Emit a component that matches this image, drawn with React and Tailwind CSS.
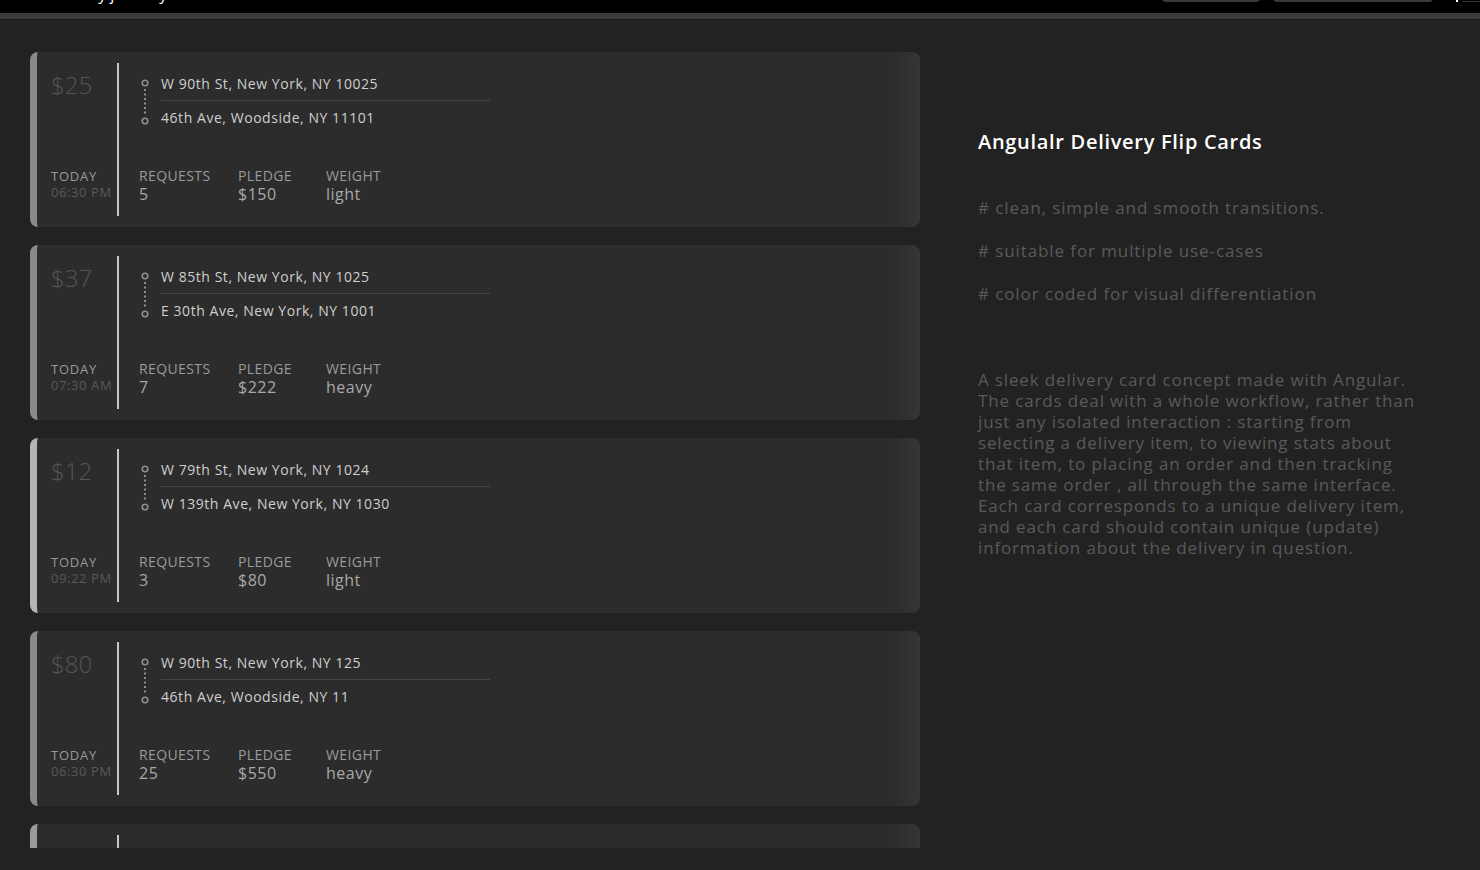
import React from "react";

const CARDS = [
  { price: "$25", from: "W 90th St, New York, NY 10025", to: "46th Ave, Woodside, NY 11101", time: "06:30 PM", requests: "5", pledge: "$150", weight: "light", stripe: "border-[#8a8a8a]" },
  { price: "$37", from: "W 85th St, New York, NY 1025", to: "E 30th Ave, New York, NY 1001", time: "07:30 AM", requests: "7", pledge: "$222", weight: "heavy", stripe: "border-[#8a8a8a]" },
  { price: "$12", from: "W 79th St, New York, NY 1024", to: "W 139th Ave, New York, NY 1030", time: "09:22 PM", requests: "3", pledge: "$80", weight: "light", stripe: "border-[#b4b4b4]" },
  { price: "$80", from: "W 90th St, New York, NY 125", to: "46th Ave, Woodside, NY 11", time: "06:30 PM", requests: "25", pledge: "$550", weight: "heavy", stripe: "border-[#8a8a8a]" },
  { price: "$15", from: "W 90th St, New York, NY 10025", to: "46th Ave, Woodside, NY 11101", time: "06:30 PM", requests: "4", pledge: "$90", weight: "light", stripe: "border-[#9a9a9a]" },
];

const font = "font-['Open_Sans','Liberation_Sans',sans-serif]";

function Route() {
  return (
    <svg width="10" height="46" viewBox="0 0 10 46" className="mt-[6px] ml-[1px] shrink-0">
      <circle cx="5" cy="4" r="2.8" fill="none" stroke="#8e8e8e" strokeWidth="1.6" />
      <line x1="5" y1="10" x2="5" y2="36" stroke="#8e8e8e" strokeWidth="2" strokeDasharray="2 2.5" />
      <circle cx="5" cy="42" r="2.8" fill="none" stroke="#8e8e8e" strokeWidth="1.6" />
    </svg>
  );
}

function Stat({ label, value, width }) {
  return (
    <div className={width}>
      <div className="text-[14px] leading-[16px] uppercase tracking-[0.4px] text-[#9a9a9a]">{label}</div>
      <div className="text-[16px] leading-[20px] tracking-[0.5px] text-[#a8a8a8]">{value}</div>
    </div>
  );
}

function DeliveryCard({ card }) {
  return (
    <div
      className={`flex h-[175px] shrink-0 rounded-lg border-l-[7px] ${card.stripe} bg-[linear-gradient(to_right,#2c2c2c_97%,#363636)]`}
    >
      <div className="flex w-[82px] flex-col justify-between border-r-2 border-[#c8c8c8] my-[11px] pl-[14px] pt-[8px] pb-[16px]">
        <div className="text-[24px] leading-[28px] font-light text-[#555]">{card.price}</div>
        <div>
          <div className="text-[13px] leading-[16px] uppercase tracking-[0.8px] text-[#9a9a9a]">Today</div>
          <div className="text-[13px] leading-[16px] tracking-[0.6px] text-[#595959]">{card.time}</div>
        </div>
      </div>
      <div className="flex flex-col justify-between pl-[20px] pt-[21px] pb-[23px]">
        <div className="flex gap-[11px]">
          <Route />
          <div className="w-[329px] text-[14px] tracking-[0.55px] text-[#cfcfcf]">
            <div className="h-[28px] leading-[22px] border-b border-[#444]">{card.from}</div>
            <div className="pt-[6px] leading-[22px]">{card.to}</div>
          </div>
        </div>
        <div className="flex">
          <Stat label="Requests" value={card.requests} width="w-[99px]" />
          <Stat label="Pledge" value={card.pledge} width="w-[88px]" />
          <Stat label="Weight" value={card.weight} width="w-[80px]" />
        </div>
      </div>
    </div>
  );
}

export default function App() {
  return (
    <div className={`h-[870px] w-[1480px] overflow-hidden bg-[#222222] ${font}`}>
      <div className="flex h-[13px] items-end overflow-hidden bg-black">
        <div className="ml-[46px] mb-[9px] text-[16px] leading-[20px] text-white">Delivery journey</div>
        <div className="ml-auto flex h-[13px] items-start gap-[13px]">
          <div className="-mt-[20px] h-[22px] w-[98px] rounded bg-[#3a3a3a]"></div>
          <div className="-mt-[20px] h-[22px] w-[160px] rounded bg-[#3a3a3a]"></div>
          <div className="flex items-start gap-[4px] pl-[10px]">
            <div className="h-[2px] w-[2px] bg-white"></div>
            <div className="mt-px h-px w-[18px] bg-[#333]"></div>
          </div>
        </div>
      </div>
      <div className="h-[7px] border-b border-[#1a1a1a] bg-[#3b3b3b]"></div>
      <div className="flex pl-[30px] pt-[32px]">
        <div className="flex h-[796px] w-[890px] flex-col gap-[18px] overflow-hidden">
          {CARDS.map((c, i) => (
            <DeliveryCard key={i} card={c} />
          ))}
        </div>
        <div className="ml-[58px] w-[460px] pt-[76px]">
          <h1 className="text-[20px] leading-[28px] font-semibold tracking-[0.7px] text-white">Angulalr Delivery Flip Cards</h1>
          <div className="mt-[41px] flex flex-col gap-[22px] text-[17px] leading-[21px] tracking-[0.9px] text-[#5a5a5a]">
            <p># clean, simple and smooth transitions.</p>
            <p># suitable for multiple use-cases</p>
            <p># color coded for visual differentiation</p>
          </div>
          <p className="mt-[65px] text-[17px] leading-[21px] tracking-[0.85px] text-[#5a5a5a]">
            A sleek delivery card concept made with Angular.<br />
            The cards deal with a whole workflow, rather than<br />
            just any isolated interaction : starting from<br />
            selecting a delivery item, to viewing stats about<br />
            that item, to placing an order and then tracking<br />
            the same order , all through the same interface.<br />
            Each card corresponds to a unique delivery item,<br />
            and each card should contain unique (update)<br />
            information about the delivery in question.
          </p>
        </div>
      </div>
    </div>
  );
}
